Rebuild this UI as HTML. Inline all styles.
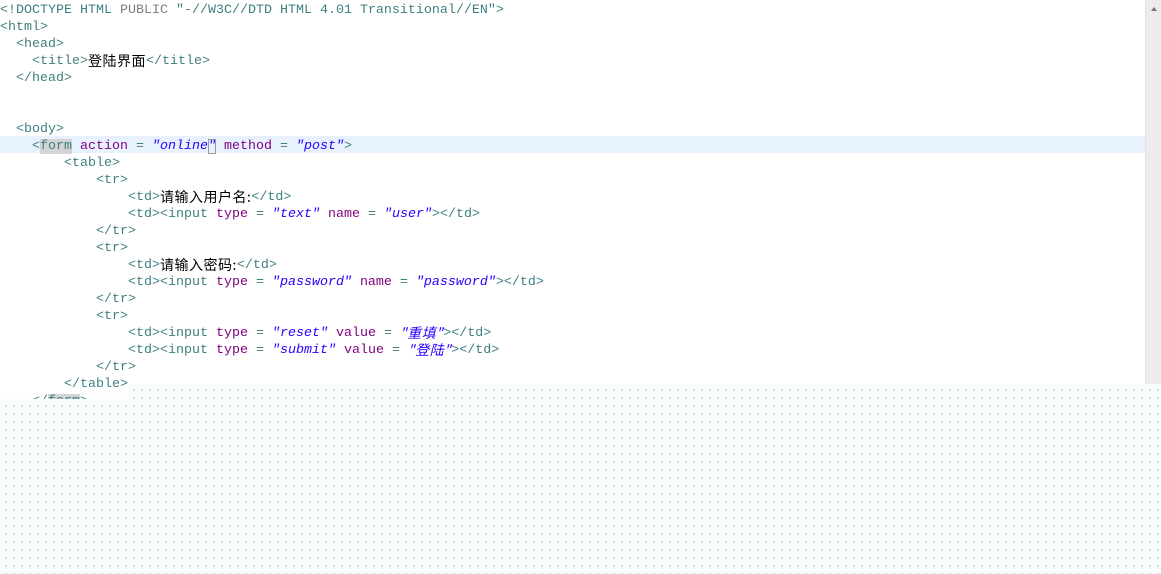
<!DOCTYPE html>
<html><head><style>
html,body{margin:0;padding:0;width:1161px;height:574px;overflow:hidden;background:#f6fcfc;}
.bg{position:absolute;left:0;top:0;width:1161px;height:574px;background-color:#f7fdfd;background-image:radial-gradient(circle,#c6d6d8 0.8px,transparent 1.1px);background-size:8px 8px;background-position:2px 2px;}
.ed{position:absolute;left:0;top:0;width:1145px;height:384px;background:#fff;overflow:hidden;}
.ed2{position:absolute;left:0;top:384px;width:128px;height:15px;background:#fff;overflow:hidden;}
.sb{position:absolute;left:1145px;top:0;width:16px;height:384px;background:#ececec;border-left:1px solid #e2e2e2;box-sizing:border-box;}
.sb:after{content:"";position:absolute;left:5px;top:7px;border-left:3px solid transparent;border-right:3px solid transparent;border-bottom:4px solid #777;}
.hl{position:absolute;left:0;top:136px;width:1145px;height:17px;background:#e8f2fe;}
pre{position:absolute;left:0;top:2px;margin:0;font:13.33px/17px "Liberation Mono",monospace;color:#3f7f7f;}
.a{color:#7f007f}.v{color:#2a00ff;font-style:italic}.g{color:#808080}
.c{color:#000;font-family:"Noto Sans CJK SC",sans-serif;font-size:14px;display:inline-block;height:17px;line-height:17px;vertical-align:top;letter-spacing:0.5px;}
.s{background:#d4d4d4}
</style></head><body>
<div class="bg"></div>
<div class="ed"><div class="hl"></div><pre>&lt;!DOCTYPE HTML <span class="g">PUBLIC</span> "-//W3C//DTD HTML 4.01 Transitional//EN"&gt;
&lt;html&gt;
  &lt;head&gt;
    &lt;title&gt;<span class="c">登陆界面</span>&lt;/title&gt;
  &lt;/head&gt;


  &lt;body&gt;
    &lt;<span class="s">form</span> <span class="a">action</span> = <span class="v">"online</span><span style="outline:1px solid #999;outline-offset:-1px" class="v">"</span> <span class="a">method</span> = <span class="v">"post"</span>&gt;
        &lt;table&gt;
            &lt;tr&gt;
                &lt;td&gt;<span class="c">请输入用户名:</span>&lt;/td&gt;
                &lt;td&gt;&lt;input <span class="a">type</span> = <span class="v">"text"</span> <span class="a">name</span> = <span class="v">"user"</span>&gt;&lt;/td&gt;
            &lt;/tr&gt;
            &lt;tr&gt;
                &lt;td&gt;<span class="c">请输入密码:</span>&lt;/td&gt;
                &lt;td&gt;&lt;input <span class="a">type</span> = <span class="v">"password"</span> <span class="a">name</span> = <span class="v">"password"</span>&gt;&lt;/td&gt;
            &lt;/tr&gt;
            &lt;tr&gt;
                &lt;td&gt;&lt;input <span class="a">type</span> = <span class="v">"reset"</span> <span class="a">value</span> = <span class="v c" style="color:#2a00ff">"重填"</span>&gt;&lt;/td&gt;
                &lt;td&gt;&lt;input <span class="a">type</span> = <span class="v">"submit"</span> <span class="a">value</span> = <span class="v c" style="color:#2a00ff">"登陆"</span>&gt;&lt;/td&gt;
            &lt;/tr&gt;
        &lt;/table&gt;
    &lt;/<span class="s">form</span>&gt;</pre></div>
<div class="ed2"><pre style="top:-8px">        &lt;/table&gt;
    &lt;/<span class="s">form</span>&gt;</pre></div>
<div class="sb"></div>
</body></html>
